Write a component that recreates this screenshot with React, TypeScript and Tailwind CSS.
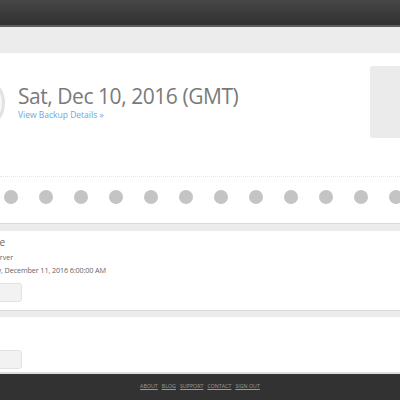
const font = { fontFamily: '"Open Sans", "Liberation Sans", sans-serif' };

const Dot = () => <span className="block w-[14px] h-[14px] rounded-full bg-[#c4c4c4] shrink-0" />;

const Button = () => (
  <div className="w-[60px] h-[19px] -ml-[38px] rounded-[3px] bg-[#f2f2f2] border border-[#e2e2e2]" />
);

// line of text whose right edge sits at a given x, the rest runs off the left edge
const Clipped = ({ right, className, children }: { right: string; className: string; children: string }) => (
  <div className={`flex justify-end ${right} ${className}`}>
    <span className="whitespace-nowrap">{children}</span>
  </div>
);

export default function App() {
  const dots = Array.from({ length: 12 });
  return (
    <div className="w-[400px] h-[400px] overflow-hidden bg-[#ececec] flex flex-col" style={font}>
      <header className="h-[27px] shrink-0 bg-gradient-to-b from-[#474747] to-[#313131] border-b-2 border-[#5c5c5c]" />
      <div className="h-[26px] shrink-0 bg-[#ececec]" />

      <section className="h-[171px] shrink-0 bg-white border-b border-[#d9d9d9] flex flex-col">
        <div className="flex items-start pt-[13px]">
          <div className="w-[56px] h-[56px] -ml-[51px] mt-[9px] rounded-full border-[3px] border-[#e2e2e2] bg-[#f8f8f8] shrink-0" />
          <div className="ml-[13px] mt-[17px]">
            <h1 className="text-[21px] leading-[26px] text-[#7a7a7a] font-normal tracking-[-0.45px]">
              Sat, Dec 10, 2016 (GMT)
            </h1>
            <a className="block text-[8.5px] leading-[11px] text-[#6ba7e0]">View Backup Details »</a>
          </div>
          <div className="ml-auto -mr-[10px] w-[40px] h-[72px] rounded-[3px] bg-[#ebebeb]" />
        </div>
        <div className="mt-[38px] border-t border-dotted border-[#e6e6e6]" />
        <div className="flex gap-[21px] pl-[4px] mt-[13px]">
          {dots.map((_, i) => (
            <Dot key={i} />
          ))}
        </div>
      </section>

      <div className="h-[7px] shrink-0 bg-[#ececec]" />

      <section className="h-[80px] shrink-0 bg-white border-b border-[#d9d9d9] pt-[4px] text-[#666]">
        <Clipped right="w-[5px]" className="text-[10px] leading-[14px]">
          Backup Schedule
        </Clipped>
        <Clipped right="w-[13px]" className="text-[7px] leading-[11px] mt-[3px]">
          Server
        </Clipped>
        <Clipped right="w-[106px]" className="text-[7.3px] leading-[11px] mt-[2px] tracking-[-0.15px]">
          Sunday, December 11, 2016 6:00:00 AM
        </Clipped>
        <div className="mt-[7px]">
          <Button />
        </div>
      </section>

      <div className="h-[6px] shrink-0 bg-[#ececec]" />

      <section className="h-[55px] shrink-0 bg-white pt-[33px]">
        <Button />
      </section>

      <footer className="flex-1 bg-[#323232] border-t-2 border-[#dedede] flex justify-center items-center gap-[4px] pb-[1px]">
        {["ABOUT", "BLOG", "SUPPORT", "CONTACT", "SIGN OUT"].map((l) => (
          <a key={l} className="text-[5.3px] text-[#9a9a9a] underline">
            {l}
          </a>
        ))}
      </footer>
    </div>
  );
}
